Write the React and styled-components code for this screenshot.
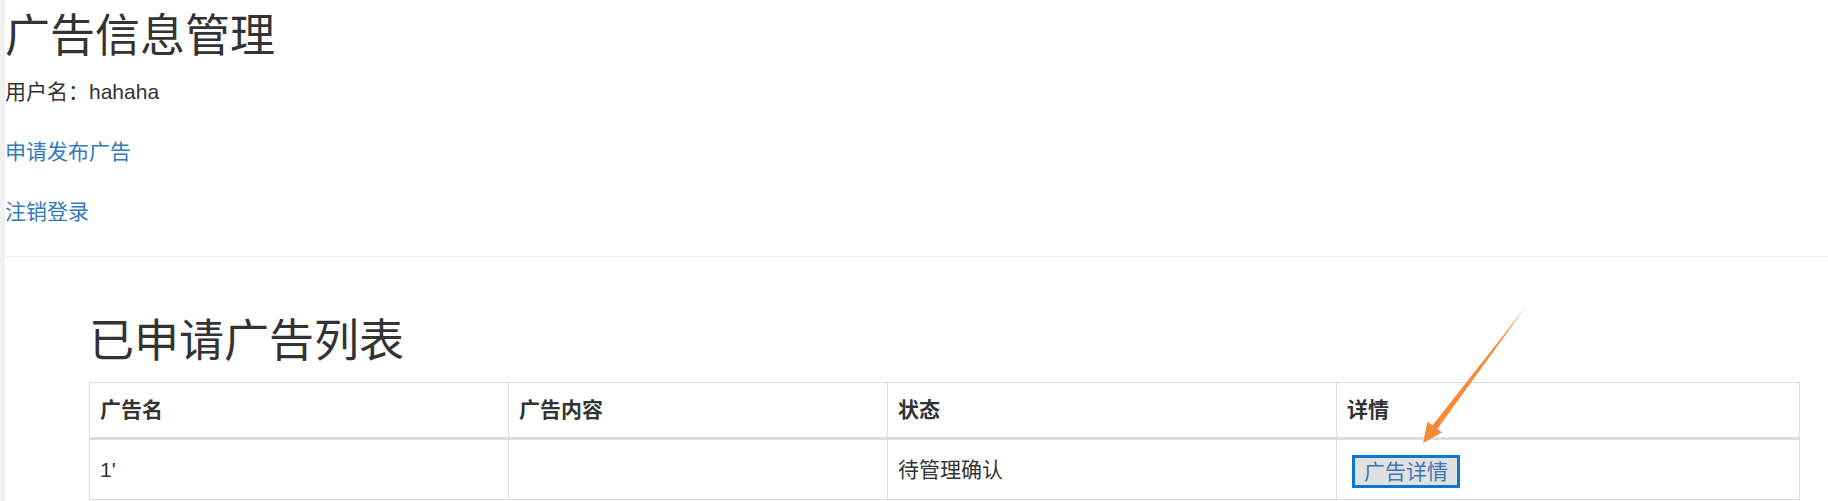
import React from "react";
import styled, { createGlobalStyle } from "styled-components";

const GlobalStyle = createGlobalStyle`
  html, body {
    margin: 0;
    padding: 0;
    background: #ffffff;
  }
  body {
    font-family: "Liberation Sans", "Noto Sans CJK SC", sans-serif;
    color: #333333;
    font-size: 21px;
  }
  * { box-sizing: border-box; }
`;

const Page = styled.div`
  position: relative;
  display: flex;
  min-height: 501px;
  overflow: hidden;
`;

const Strip = styled.div`
  width: 5px;
  flex: 0 0 5px;
  background: #f1f1f1;
`;

const Main = styled.main`
  flex: 1;
  display: flex;
  flex-direction: column;
`;

const Header = styled.header`
  display: flex;
  flex-direction: column;
  padding-top: 12px;
`;

const Heading = styled.h1`
  margin: 0;
  font-size: 45px;
  line-height: 50px;
  font-weight: 400;
  color: #333333;
`;

const InfoList = styled.div`
  display: flex;
  flex-direction: column;
  gap: 32px;
  margin-top: 16px;
`;

const Line = styled.p`
  margin: 0;
  font-size: 21px;
  line-height: 28px;
`;

const Link = styled.a`
  color: #337ab7;
  text-decoration: none;
`;

const Rule = styled.hr`
  margin: 30px 0 0;
  border: 0;
  border-top: 1px solid #eeeeee;
  height: 0;
`;

const ListSection = styled.section`
  display: flex;
  flex-direction: column;
  padding: 60px 29px 0 84px;
  gap: 15px;
`;

const Table = styled.table`
  width: 100%;
  border-collapse: collapse;
  table-layout: fixed;
  border: 1px solid #dddddd;
`;

const HeadCell = styled.th`
  text-align: left;
  font-weight: 700;
  font-size: 21px;
  line-height: 34px;
  padding: 10px;
  border: 1px solid #dddddd;
  border-bottom: 3px solid #dddddd;
  color: #333333;
`;

const Cell = styled.td`
  font-size: 21px;
  line-height: 39px;
  padding: 10px;
  border: 1px solid #dddddd;
  vertical-align: middle;
  color: #333333;
`;

const DetailButton = styled.button`
  margin-left: 5px;
  display: inline-block;
  vertical-align: middle;
  height: 33px;
  padding: 0 9px;
  font-family: inherit;
  font-size: 21px;
  line-height: 27px;
  color: #3f76b5;
  background: #e1e1e1;
  border: 3px solid #0a78d7;
  cursor: pointer;
`;

const Annotation = styled.svg`
  position: absolute;
  left: 0;
  top: 0;
  width: 1828px;
  height: 501px;
  pointer-events: none;
`;

const columns = [
  { key: "name", label: "广告名", width: 419 },
  { key: "content", label: "广告内容", width: 379 },
  { key: "status", label: "状态", width: 449 },
  { key: "detail", label: "详情", width: 463 },
];

const rows = [{ name: "1'", content: "", status: "待管理确认" }];

export default function App() {
  return (
    <>
      <GlobalStyle />
      <Page>
        <Strip />
        <Main>
          <Header>
            <Heading>广告信息管理</Heading>
            <InfoList>
              <Line>用户名：hahaha</Line>
              <Line>
                <Link href="#">申请发布广告</Link>
              </Line>
              <Line>
                <Link href="#">注销登录</Link>
              </Line>
            </InfoList>
          </Header>
          <Rule />
          <ListSection>
            <Heading>已申请广告列表</Heading>
            <Table>
              <colgroup>
                {columns.map((c) => (
                  <col key={c.key} style={{ width: c.width }} />
                ))}
              </colgroup>
              <thead>
                <tr>
                  {columns.map((c) => (
                    <HeadCell key={c.key}>{c.label}</HeadCell>
                  ))}
                </tr>
              </thead>
              <tbody>
                {rows.map((r, i) => (
                  <tr key={i}>
                    <Cell>{r.name}</Cell>
                    <Cell>{r.content}</Cell>
                    <Cell>{r.status}</Cell>
                    <Cell>
                      <DetailButton>广告详情</DetailButton>
                    </Cell>
                  </tr>
                ))}
              </tbody>
            </Table>
          </ListSection>
        </Main>
        <Annotation viewBox="0 0 1828 501">
          <polygon
            points="1527.5,304.5 1437.5,428.8 1442,432.5 1423,443 1427.5,421.5 1432.6,425.2"
            fill="#f68a38"
          />
        </Annotation>
      </Page>
    </>
  );
}
